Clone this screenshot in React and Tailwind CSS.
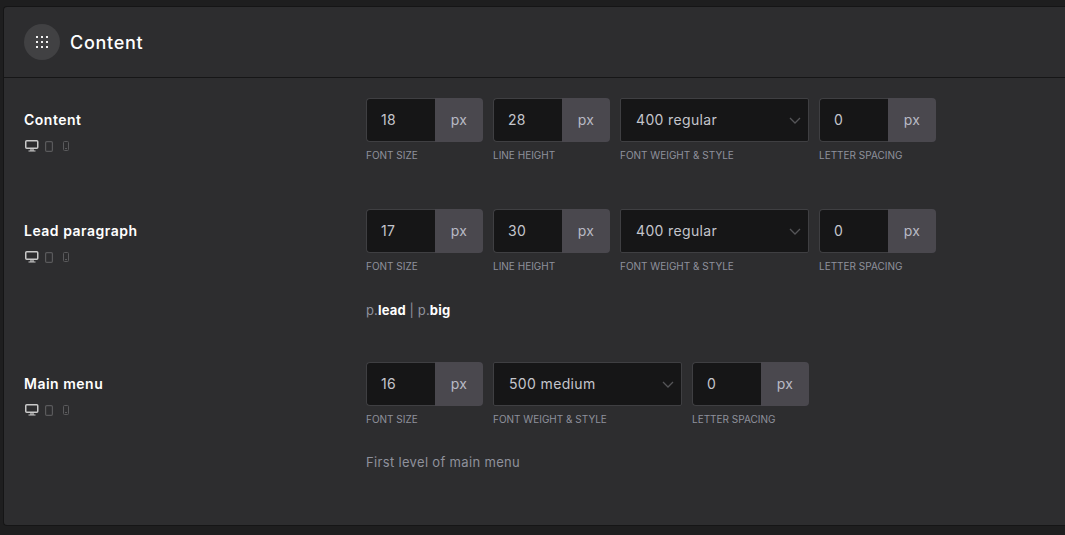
import React from "react";

const FONT = "font-['Inter','Noto_Sans',sans-serif]";

function GridDots() {
    const dots = [];
    for (let y = 0; y < 3; y++) {
        for (let x = 0; x < 3; x++) {
            dots.push(<rect key={`${x}-${y}`} x={x * 5} y={y * 5} width="2" height="2" fill="#f2f2f2" />);
        }
    }
    return (
        <svg width="12" height="12" viewBox="0 0 12 12">
            {dots}
        </svg>
    );
}

function Devices() {
    return (
        <div className="flex items-center mt-[11px] h-[12px]">
            <svg width="14" height="12" viewBox="0 0 14 12" fill="none" className="ml-[1px]">
                <rect x="0.75" y="0.75" width="12" height="7.5" rx="1" stroke="#c9c9c9" strokeWidth="1.5" />
                <path d="M6 9v1.5M8 9v1.5M3.5 11h7" stroke="#c9c9c9" strokeWidth="1.2" />
            </svg>
            <svg width="8" height="11" viewBox="0 0 8 11" fill="none" className="ml-[6px]">
                <rect x="0.6" y="0.6" width="6.8" height="9.8" rx="1.2" stroke="#5a5a5c" strokeWidth="1.2" />
            </svg>
            <svg width="6" height="10" viewBox="0 0 6 10" fill="none" className="ml-[10px]">
                <rect x="0.5" y="0.5" width="5" height="9" rx="1" stroke="#5a5a5c" />
                <path d="M2 7.5h2" stroke="#5a5a5c" />
            </svg>
        </div>
    );
}

function NumberField({ value, label }) {
    return (
        <div className="w-[117px]">
            <div className="flex h-[44px]">
                <div className="w-[69px] rounded-l-[4px] border border-r-0 border-[#3f3f42] bg-[#161617] pl-[14px] pb-[2px] flex items-center text-[14px] tracking-[0.3px] text-[#c4c5cc]">{value}</div>
                <div className="flex-1 rounded-r-[4px] bg-[#4a484e] pb-[2px] flex items-center justify-center text-[14px] tracking-[0.3px] text-[#b9bac4]">px</div>
            </div>
            <div className="mt-[6px] text-[10px] leading-[14px] uppercase text-[#8f919c] whitespace-nowrap">{label}</div>
        </div>
    );
}

function SelectField({ value }) {
    return (
        <div className="w-[189px]">
            <div className="flex items-center justify-between h-[44px] rounded-[2px] border border-[#3f3f42] bg-[#161617] pl-[15px] pr-[7px] text-[14px] tracking-[0.35px] text-[#c4c5cc]">
                <span className="-mt-[2px]">{value}</span>
                <svg width="12" height="7" viewBox="0 0 12 7" fill="none">
                    <path d="M1 1l5 5 5-5" stroke="#555558" strokeWidth="1.3" />
                </svg>
            </div>
            <div className="mt-[6px] text-[10px] leading-[14px] uppercase text-[#8f919c] whitespace-nowrap">Font weight &amp; style</div>
        </div>
    );
}

function Row({ title, pt, children }) {
    return (
        <div className={`flex ${pt}`}>
            <div className="w-[362px] shrink-0 pl-[20px] pt-[13px]">
                <div className="text-[14px] leading-[18px] font-semibold tracking-[0.5px] text-white">{title}</div>
                <Devices />
            </div>
            <div>{children}</div>
        </div>
    );
}

export default function App() {
    return (
        <div className={`${FONT} h-[535px] w-[1065px] overflow-hidden bg-[#1e1e1f] pt-[6px] pb-[9px] pl-[3px]`}>
            <div className="h-full rounded-tl-[4px] rounded-bl-[4px] border border-r-0 border-[#151516] bg-[#2d2d2f]">
                <div className="flex items-center h-[71px] border-b border-[#161617] pl-[20px]">
                    <div className="flex items-center justify-center w-[36px] h-[36px] rounded-full bg-[#414143]">
                        <GridDots />
                    </div>
                    <div className="ml-[10px] text-[18px] font-medium tracking-[0.7px] text-white">Content</div>
                </div>

                <Row title="Content" pt="pt-[20px]">
                    <div className="flex gap-[10px]">
                        <NumberField value="18" label="Font size" />
                        <NumberField value="28" label="Line height" />
                        <SelectField value="400 regular" />
                        <NumberField value="0" label="Letter spacing" />
                    </div>
                </Row>

                <Row title="Lead paragraph" pt="pt-[47px]">
                    <div className="flex gap-[10px]">
                        <NumberField value="17" label="Font size" />
                        <NumberField value="30" label="Line height" />
                        <SelectField value="400 regular" />
                        <NumberField value="0" label="Letter spacing" />
                    </div>
                    <div className="mt-[27px] text-[13px] leading-[20px] tracking-[0.15px] text-[#8f919c]">
                        p.<b className="font-bold text-white">lead</b> | p.<b className="font-bold text-white">big</b>
                    </div>
                </Row>

                <Row title="Main menu" pt="pt-[42px]">
                    <div className="flex gap-[10px]">
                        <NumberField value="16" label="Font size" />
                        <SelectField value="500 medium" />
                        <NumberField value="0" label="Letter spacing" />
                    </div>
                    <div className="mt-[26px] text-[13px] leading-[20px] tracking-[0.33px] text-[#8f919c]">First level of main menu</div>
                </Row>
            </div>
        </div>
    );
}
